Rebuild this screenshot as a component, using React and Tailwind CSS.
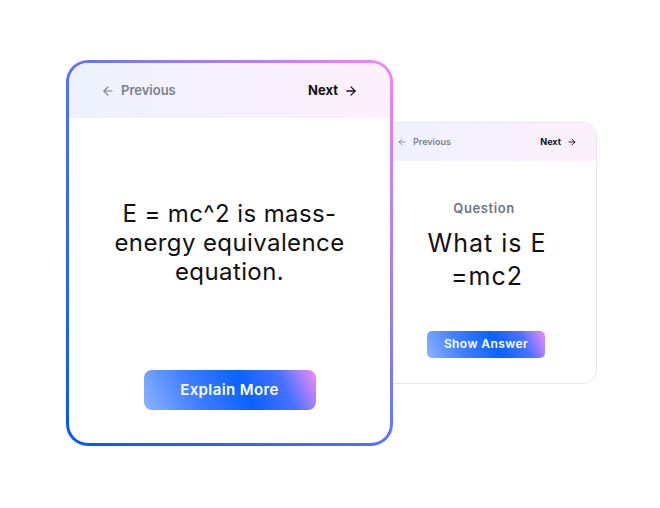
import React from "react";
import { ArrowLeft, ArrowRight } from "lucide-react";

const Header = ({ small }) => (
  <div
    className={
      "flex items-center justify-between bg-[linear-gradient(to_right,#eef2fe,#fdf0fc)] " +
      (small ? "h-[38px] px-[19px] text-[9px]" : "h-[55px] px-[32px] text-[13px]")
    }>
    <button className="flex items-center gap-[6px] font-semibold text-[#7b7f8c]">
      <ArrowLeft size={small ? 10 : 14} strokeWidth={2} />
      Previous
    </button>
    <button className="flex items-center gap-[6px] font-bold text-[#111]">
      Next
      <ArrowRight size={small ? 10 : 14} strokeWidth={2.2} />
    </button>
  </div>
);

const gradientBtn =
  "bg-[linear-gradient(65deg,#8cb4ff_0%,#3f7eff_30%,#0a62ff_58%,#4a72ff_80%,#f58cf7_100%)] text-white font-semibold tracking-[0.4px]";

export default function App() {
  return (
    <div className="w-[660px] h-[508px] bg-white flex items-center justify-center font-['Inter',sans-serif]">
      <div className="flex items-center ml-[3px] -mt-[2px]">
        <div className="relative z-10 w-[327px] h-[386px] rounded-[22px] p-[3px] bg-[linear-gradient(to_top_right,#0058ff_0%,#4a70ff_45%,#8f7cff_65%,#f783f6_100%)]">
          <div className="w-full h-full rounded-[19px] bg-white overflow-hidden flex flex-col">
            <Header />
            <div className="flex-1 flex flex-col items-center">
              <p className="mt-[81px] px-[20px] text-center text-[24px] leading-[29px] tracking-[0.4px] text-[#111]">
                E = mc^2 is mass-
                <br />
                energy equivalence
                <br />
                equation.
              </p>
              <button className={"mt-auto mb-[33px] w-[172px] h-[40px] rounded-[8px] text-[15px] " + gradientBtn}>
                Explain More
              </button>
            </div>
          </div>
        </div>

        <div className="-ml-[16px] w-[220px] h-[262px] rounded-[14px] border border-[#e6e8f0] bg-white overflow-hidden flex flex-col">
          <Header small />
          <div className="flex flex-col items-center">
            <p className="mt-[38px] mr-[6px] text-[13px] font-semibold tracking-[0.6px] text-[#6f7587]">Question</p>
            <p className="mt-[8px] text-center text-[25px] leading-[33px] tracking-[1px] text-[#111]">
              What is E
              <br />
              =mc2
            </p>
            <button className={"mt-[38px] ml-[-2px] w-[118px] h-[27px] rounded-[5px] text-[12px] " + gradientBtn}>
              Show Answer
            </button>
          </div>
        </div>
      </div>
    </div>
  );
}
